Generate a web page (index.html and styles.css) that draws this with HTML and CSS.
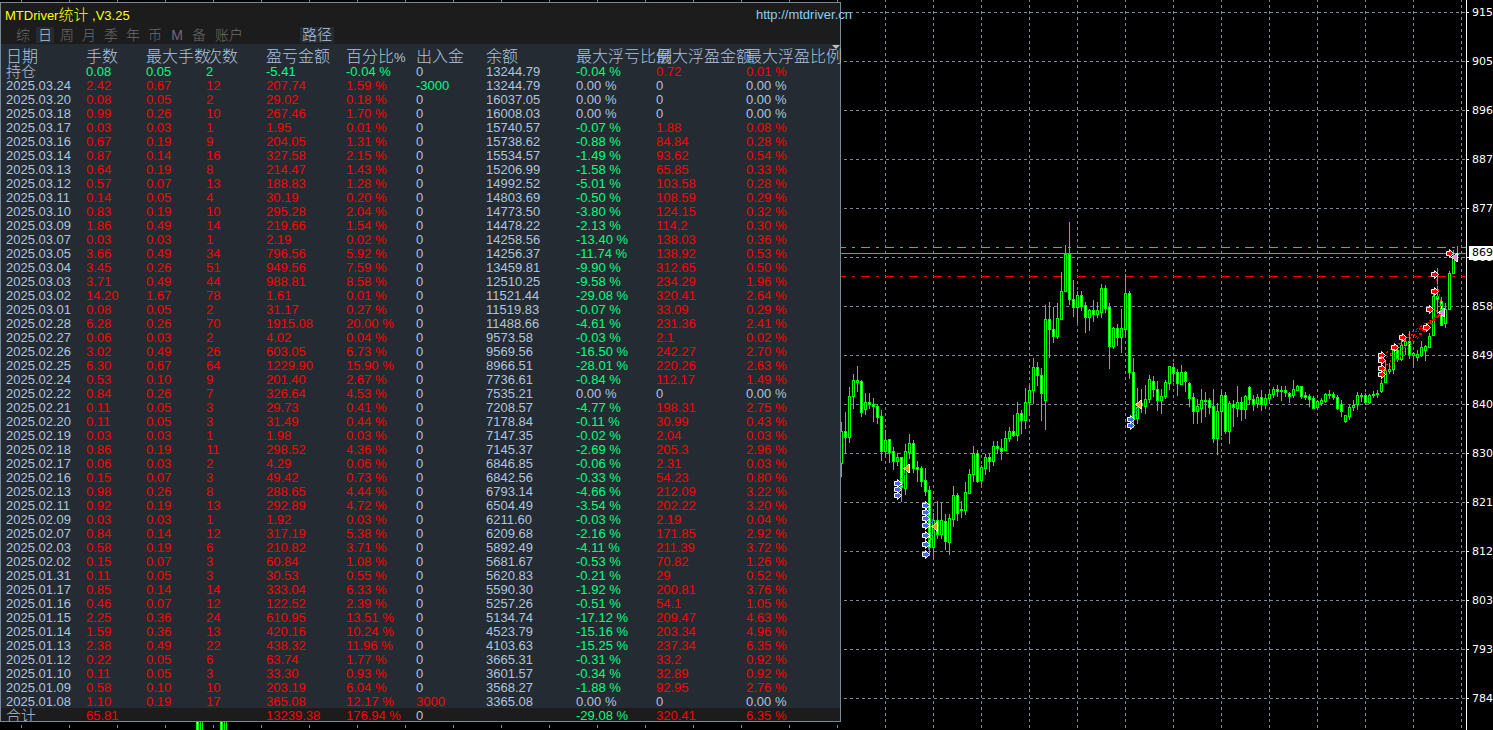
FILE: index.html
```html
<!DOCTYPE html>
<html lang="zh-CN">
<head>
<meta charset="utf-8">
<title>MTDriver统计</title>
<link rel="stylesheet" href="styles.css">
</head>
<body>
<main class="terminal">
  <svg class="chart" id="chart" viewBox="0 0 1466 730" preserveAspectRatio="xMinYMin slice" role="img" aria-label="K线图"></svg>

  <aside class="scale" aria-label="价格">
    <ol class="scale-list">
      <li>915</li><li>905</li><li>896</li><li>887</li><li>877</li><li>868</li><li>858</li><li>849</li>
      <li>840</li><li>830</li><li>821</li><li>812</li><li>803</li><li>793</li><li>784</li>
    </ol>
    <span class="scale-now">869</span>
  </aside>

  <section class="panel" aria-label="统计">
    <header class="panel-head">
      <div class="title-row">
        <h1 class="title">MTDriver<span class="title-cjk">统计</span> ,V3.25</h1>
        <a class="site" href="http://mtdriver.cn">http://mtdriver.cn</a>
      </div>
      <nav class="tabs" aria-label="周期">
        <button class="tab" type="button"><span>综</span></button>
        <button class="tab tab-on" type="button"><span>日</span></button>
        <button class="tab" type="button"><span>周</span></button>
        <button class="tab" type="button"><span>月</span></button>
        <button class="tab" type="button"><span>季</span></button>
        <button class="tab" type="button"><span>年</span></button>
        <button class="tab" type="button"><span>币</span></button>
        <button class="tab" type="button"><span>M</span></button>
        <button class="tab" type="button"><span>备</span></button>
        <button class="tab tab-wide" type="button"><span>账户</span></button>
        <button class="tab tab-path" type="button"><span>路径</span></button>
      </nav>
    </header>
    <svg class="shift-mark" width="8" height="4" viewBox="0 0 8 4" aria-hidden="true"><path d="M0 0h8L4 4z" fill="#c0c0c0"/></svg>
    <table class="stats">
      <colgroup>
        <col class="w80"><col class="w60"><col class="w60"><col class="w60"><col class="w80"><col class="w70">
        <col class="w70"><col class="w90"><col class="w80"><col class="w90"><col class="w94">
      </colgroup>
      <thead>
        <tr><th>日期</th><th>手数</th><th>最大手数</th><th>次数</th><th>盈亏金额</th><th>百分比<span class="unit">%</span></th><th>出入金</th><th>余额</th><th>最大浮亏比例</th><th>最大浮盈金额</th><th>最大浮盈比例</th></tr>
      </thead>
      <tbody id="rows"></tbody>
    </table>
    <div class="total-clip">
      <table class="stats total">
        <colgroup>
          <col class="w80"><col class="w60"><col class="w60"><col class="w60"><col class="w80"><col class="w70">
          <col class="w70"><col class="w90"><col class="w80"><col class="w90"><col class="w94">
        </colgroup>
        <tbody>
          <tr><td class="cjk">合计</td><td class="up">65.81</td><td></td><td></td><td class="up">13239.38</td><td class="up">176.94 %</td><td>0</td><td></td><td class="down">-29.08 %</td><td class="up">320.41</td><td class="up">6.35 %</td></tr>
        </tbody>
      </table>
    </div>
  </section>
</main>
<script src="app.js"></script>
</body>
</html>
```

FILE: styles.css
```css
* { box-sizing: border-box; }

body {
  margin: 0;
  background: #000;
  color: #b0c4de;
  font: 13px/14px "Liberation Sans", "Noto Sans CJK SC", sans-serif;
}

.terminal {
  position: relative;
  display: grid;
  grid-template-columns: 1fr 27px;
  height: 100vh;
  overflow: hidden;
}

.chart {
  display: block;
  width: 100%;
  height: 100%;
  min-height: 0;
  shape-rendering: crispEdges;
}

/* price scale */
.scale {
  position: relative;
  border-left: 1px solid #fff;
  color: #fff;
  font: 11px/49px "DejaVu Sans", sans-serif;
  overflow: hidden;
}
.scale-list {
  list-style: none;
  margin: -12px 0 0;
  padding: 0;
}
.scale-list li {
  display: flex;
  align-items: center;
  gap: 3px;
  height: 49px;
}
.scale-list li::before {
  content: "";
  width: 2px;
  height: 1px;
  background: #fff;
}
.scale-now {
  position: absolute;
  top: 246px;
  left: 2px;
  right: 0;
  padding-left: 3px;
  background: #fff;
  color: #000;
  line-height: 14px;
}

/* statistics window */
.panel {
  position: absolute;
  top: 2px;
  left: 0;
  border: 1px solid #778899;
  background: #252b33;
}
.panel-head {
  background: #1c1c1c;
  height: 41px;
}
.title-row {
  display: flex;
  height: 24px;
  padding-left: 4px;
  align-items: center;
}
.title {
  margin: 0;
  color: #ff0;
  font-size: 13px;
  font-weight: 400;
}
.title-cjk { font-size: 15px; font-weight: 300; }
.site {
  margin-left: auto;
  margin-right: -12px;
  color: #87cefa;
  text-decoration: none;
}
.tabs {
  display: flex;
  padding-left: 11px;
}
.tab {
  display: flex;
  justify-content: center;
  width: 22px;
  height: 16px;
  border: 0;
  padding: 0;
  background: none;
  color: #6c6c6c;
  font: 300 14px/16px "Liberation Sans", "Noto Sans CJK SC", sans-serif;
}
.tab span {
  display: block;
  height: 16px;
  text-align: center;
}
.tab-wide { width: 38px; }
.tab-on span,
.tab-path span {
  background: #252b33;
  color: #b0c4de;
}
.tab-on span { width: 18px; }
.tab-path {
  width: 34px;
  margin-left: 52px;
  font-size: 15px;
}
.tab-path span { width: 34px; }

.shift-mark {
  position: absolute;
  top: 42px;
  right: 0;
}

.stats {
  table-layout: fixed;
  width: 834px;
  margin-left: 5px;
  border-collapse: collapse;
}
.stats th,
.stats td {
  height: 14px;
  padding: 2px 0 0;
  line-height: 12px;
  text-align: left;
  white-space: nowrap;
}
.stats th {
  height: 20px;
  padding-top: 5px;
  font-size: 16px;
  font-weight: 300;
  line-height: 15px;
  vertical-align: top;
}
.stats .cjk {
  font-size: 15px;
  font-weight: 300;
}
.unit { font-size: 13px; line-height: 1px; }
.w60 { width: 60px; }
.w70 { width: 70px; }
.w80 { width: 80px; }
.w90 { width: 90px; }
.w94 { width: 94px; }
.up { color: #f00; }
.down { color: #00ff7f; }

.total-clip {
  height: 13px;
  background: #1c1c1c;
  overflow: hidden;
}

/* chart strokes */
.grid-h, .grid-v { stroke: #778899; stroke-dasharray: 3 3; }
.level { stroke-dasharray: 9 6 3 6; }
.level-green { stroke: #32cd32; }
.level-red { stroke: #f00; }
.bid { stroke: #778899; }
.wick { stroke: #0f0; }
.bull { fill: #000; stroke: #0f0; }
.bear { fill: #fff; stroke: #0f0; }
.link-sell { stroke: #f00; stroke-dasharray: 2 3; }
.link-buy { stroke: #4169e1; stroke-dasharray: 2 3; }
.mark { stroke: #fff; shape-rendering: geometricPrecision; }
.sell { fill: #f00; }
.buy { fill: #4169e1; }
.exit-buy { fill: #daa520; shape-rendering: geometricPrecision; }
.exit-sell { fill: #ee82ee; shape-rendering: geometricPrecision; }
```

FILE: app.js
```js
// date, lots, max lots, trades, profit, percent, deposit, balance, max loss %, max gain, max gain %
const stats = `持仓|0.08|0.05|2|-5.41|-0.04|0|13244.79|-0.04|0.72|0.01
2025.03.24|2.42|0.67|12|207.74|1.59|-3000|13244.79|0.00|0|0.00
2025.03.20|0.08|0.05|2|29.02|0.18|0|16037.05|0.00|0|0.00
2025.03.18|0.99|0.26|10|267.46|1.70|0|16008.03|0.00|0|0.00
2025.03.17|0.03|0.03|1|1.95|0.01|0|15740.57|-0.07|1.88|0.08
2025.03.16|0.67|0.19|9|204.05|1.31|0|15738.62|-0.88|84.84|0.28
2025.03.14|0.87|0.14|16|327.58|2.15|0|15534.57|-1.49|93.62|0.54
2025.03.13|0.64|0.19|8|214.47|1.43|0|15206.99|-1.58|65.85|0.33
2025.03.12|0.57|0.07|13|188.83|1.28|0|14992.52|-5.01|103.58|0.28
2025.03.11|0.14|0.05|4|30.19|0.20|0|14803.69|-0.50|108.59|0.29
2025.03.10|0.83|0.19|10|295.28|2.04|0|14773.50|-3.80|124.15|0.32
2025.03.09|1.86|0.49|14|219.66|1.54|0|14478.22|-2.13|114.2|0.30
2025.03.07|0.03|0.03|1|2.19|0.02|0|14258.56|-13.40|138.03|0.36
2025.03.05|3.66|0.49|34|796.56|5.92|0|14256.37|-11.74|138.92|0.53
2025.03.04|3.45|0.26|51|949.56|7.59|0|13459.81|-9.90|312.65|0.50
2025.03.03|3.71|0.49|44|988.81|8.58|0|12510.25|-9.58|234.29|1.96
2025.03.02|14.20|1.67|78|1.61|0.01|0|11521.44|-29.08|320.41|2.64
2025.03.01|0.08|0.05|2|31.17|0.27|0|11519.83|-0.07|33.09|0.29
2025.02.28|6.28|0.26|70|1915.08|20.00|0|11488.66|-4.61|231.36|2.41
2025.02.27|0.06|0.03|2|4.02|0.04|0|9573.58|-0.03|2.1|0.02
2025.02.26|3.02|0.49|26|603.05|6.73|0|9569.56|-16.50|242.27|2.70
2025.02.25|6.30|0.67|64|1229.90|15.90|0|8966.51|-28.01|220.26|2.63
2025.02.24|0.53|0.10|9|201.40|2.67|0|7736.61|-0.84|112.17|1.49
2025.02.22|0.84|0.26|7|326.64|4.53|0|7535.21|0.00|0|0.00
2025.02.21|0.11|0.05|3|29.73|0.41|0|7208.57|-4.77|198.31|2.75
2025.02.20|0.11|0.05|3|31.49|0.44|0|7178.84|-0.11|30.99|0.43
2025.02.19|0.03|0.03|1|1.98|0.03|0|7147.35|-0.02|2.04|0.03
2025.02.18|0.86|0.19|11|298.52|4.36|0|7145.37|-2.69|205.3|2.96
2025.02.17|0.06|0.03|2|4.29|0.06|0|6846.85|-0.06|2.31|0.03
2025.02.16|0.15|0.07|3|49.42|0.73|0|6842.56|-0.33|54.23|0.80
2025.02.13|0.98|0.26|8|288.65|4.44|0|6793.14|-4.66|212.09|3.22
2025.02.11|0.92|0.19|13|292.89|4.72|0|6504.49|-3.54|202.22|3.20
2025.02.09|0.03|0.03|1|1.92|0.03|0|6211.60|-0.03|2.19|0.04
2025.02.07|0.84|0.14|12|317.19|5.38|0|6209.68|-2.16|171.85|2.92
2025.02.03|0.58|0.19|6|210.82|3.71|0|5892.49|-4.11|211.39|3.72
2025.02.02|0.15|0.07|3|60.84|1.08|0|5681.67|-0.53|70.82|1.26
2025.01.31|0.11|0.05|3|30.53|0.55|0|5620.83|-0.21|29|0.52
2025.01.17|0.85|0.14|14|333.04|6.33|0|5590.30|-1.92|200.81|3.76
2025.01.16|0.46|0.07|12|122.52|2.39|0|5257.26|-0.51|54.1|1.05
2025.01.15|2.25|0.36|24|610.95|13.51|0|5134.74|-17.12|209.47|4.63
2025.01.14|1.59|0.36|13|420.16|10.24|0|4523.79|-15.16|203.34|4.96
2025.01.13|2.38|0.49|22|438.32|11.96|0|4103.63|-15.25|237.34|6.35
2025.01.12|0.22|0.05|6|63.74|1.77|0|3665.31|-0.31|33.2|0.92
2025.01.10|0.11|0.05|3|33.30|0.93|0|3601.57|-0.34|32.89|0.92
2025.01.09|0.58|0.10|10|203.19|6.04|0|3568.27|-1.88|92.95|2.76
2025.01.08|1.10|0.19|17|365.08|12.17|3000|3365.08|0.00|0|0.00`;

const tone = v => (v > 0 ? 'up' : v < 0 ? 'down' : '');

document.getElementById('rows').innerHTML = stats.split('\n').map(line => {
  const c = line.split('|');
  return '<tr>' + c.map((text, i) => {
    let cls = '';
    if (i === 0) cls = /\d/.test(text) ? '' : 'cjk';
    else if (i <= 5) cls = tone(+c[4]);
    else if (i !== 7) cls = tone(+text);
    const unit = i === 5 || i === 8 || i === 10 ? ' %' : '';
    return `<td class="${cls}">${text}${unit}</td>`;
  }).join('') + '</tr>';
}).join('');

// candles, 4px apart: high, body top, body bottom, low; u = rising, d = falling
const firstX = 841;
const candles = `422 431 463 476u,412 431 437 453d,387 396 437 442u,374 380 396 408u,366 380 382 391u,380 381 412 416d,
393 402 409 414u,393 402 404 408d,398 404 406 421d,404 406 417 423d,410 416 451 460d,430 440 451 456u,439 439 452 462d,
447 451 461 469d,453 457 461 465u,457 457 487 501d,444 451 488 494u,434 443 452 458u,440 443 468 472d,461 467 469 481d,
466 468 481 486d,468 480 491 495d,486 490 547 555d,513 520 547 559u,501 520 534 538d,503 520 534 538u,514 521 541 549d,
514 518 542 554u,486 495 519 526u,493 495 513 520d,501 509 510 517u,482 492 510 514u,469 474 493 493u,446 453 474 481u,
450 453 481 482d,465 467 480 484u,454 457 468 474u,453 457 461 471d,441 446 461 465u,441 446 448 453d,439 448 451 459d,
431 438 450 450u,427 431 438 441u,415 431 435 436d,402 413 435 440u,410 413 420 433d,388 402 420 428u,385 390 402 414u,
358 367 390 403u,362 367 375 385d,368 375 393 420d,305 319 400 429u,302 319 329 357d,307 329 336 342d,303 318 336 338u,
272 291 319 319u,245 254 291 291u,222 254 299 304d,280 299 307 316d,291 295 307 322u,291 295 306 310d,302 305 317 332d,
309 310 317 330u,300 310 314 321d,302 310 314 317u,284 288 312 317u,285 288 308 312d,303 307 346 368d,327 328 346 348u,
324 328 337 345d,309 328 337 352u,274 293 329 335u,291 293 372 378d,358 372 418 427d,388 407 418 423u,389 403 405 412u,
385 399 406 413u,375 379 399 402u,376 381 389 396d,381 389 400 410d,389 396 400 413u,380 382 396 398u,366 366 383 389u,
363 367 373 381d,369 372 383 395d,365 372 384 384u,371 372 381 391d,382 383 398 406d,393 397 411 423d,399 406 411 423u,
389 400 408 422u,392 400 401 416u,398 400 407 413d,389 406 438 442d,403 411 438 454u,391 395 411 435u,392 395 431 433d,
401 403 431 443u,400 404 407 426d,386 402 408 416u,397 402 409 420d,395 396 409 418u,386 387 399 404d,395 399 404 410d,
394 397 403 407u,390 397 404 410d,394 398 404 408u,390 394 398 403u,387 389 394 397u,385 389 391 396d,386 390 391 400u,
386 390 392 396d,392 393 396 402d,380 389 395 397u,385 386 390 390u,386 386 396 398d,392 395 397 399d,394 396 399 406d,
396 398 408 408d,400 401 407 409u,398 400 403 405u,393 394 401 402u,390 394 395 398d,392 394 397 399d,395 397 408 409d,
400 404 411 416d,415 415 421 422u,405 407 416 419u,400 405 407 410u,392 395 404 409u,393 395 396 401u,393 395 402 404d,
394 395 402 403u,391 394 395 397u,390 393 394 397u,380 383 391 392u,360 370 382 382u,363 369 371 373u,345 350 369 373u,
345 350 359 361d,340 345 359 360u,337 341 345 354u,331 341 354 358d,352 353 355 365u,350 354 357 360u,341 347 355 356u,
345 346 350 360u,333 336 347 347u,293 296 335 335u,268 296 299 313d,297 301 325 325d,303 309 323 327u,271 273 309 309u,
250 256 273 273u,246 253 254 260u`;

const out = [];
const line = (cls, x1, y1, x2, y2) =>
  out.push(`<line class="${cls}" x1="${x1 + .5}" y1="${y1 + .5}" x2="${x2 + .5}" y2="${y2 + .5}"/>`);
const vline = (cls, x, y1, y2) => out.push(`<path class="${cls}" d="M${x + .5} ${y1}V${y2}"/>`);
const hline = (cls, y, x1, x2) => out.push(`<path class="${cls}" d="M${x1} ${y + .5}H${x2}"/>`);

for (let y = 12; y < 730; y += 49) hline('grid-h', y, -2, 1466);
for (let x = 21; x < 1466; x += 48) vline('grid-v', x, -1, 730);

hline('level level-green', 247, -3, 1466);
hline('level level-red', 276, -3, 1466);

candles.split(',').forEach((item, i) => {
  const x = firstX + 4 * i;
  const [high, top, bottom, low] = item.trim().slice(0, -1).split(' ').map(Number);
  vline('wick', x, high, low + 1);
  out.push(`<rect class="${item.endsWith('u') ? 'bull' : 'bear'}" x="${x - .5}" y="${top + .5}" width="2" height="${Math.max(bottom - top, 1)}"/>`);
});

// candle feet showing under the window
[196, 220].forEach(x => {
  out.push(`<rect x="${x}" y="722" width="3" height="8" fill="#0f0"/><rect x="${x + 1}" y="722" width="1" height="8" fill="#fff"/>`);
  vline('wick', x + 4, 722, 730);
  vline('wick', x + 6, 722, 730);
});

hline('bid', 253, 0, 1466);
hline('level level-green', 253, -3, 1466);

const sells = [[1382,355],[1382,360],[1382,368],[1382,374],[1395,347],[1403,337],[1427,327],[1430,309],[1435,291],[1435,274]];
sells.forEach(([x, y]) => line('link-sell', x, y, 1442, 312));
line('link-sell', 1450, 253, 1455, 257);

const buys = [
  [907, 468, [[898,483],[898,489],[898,495]]],
  [935, 526, [[926,505],[926,512],[926,518],[926,525],[926,535],[926,544],[926,554]]],
  [1139, 404, [[1131,419],[1131,425]]]
];
const arrow = (cls, x, y) =>
  out.push(`<path class="mark ${cls}" d="M${x - 3.5} ${y - 1.5}h3v-2l4 4l-4 4v-2h-3z"/>`);
const exit = (cls, x, y) =>
  out.push(`<path d="M${x - 4} ${y + .5}L${x + 2} ${y - 4}h1v9h-1z" fill="#fff"/><path class="${cls}" d="M${x - 3} ${y + .5}l5-4v8z"/>`);

buys.forEach(([tx, ty, from]) => {
  from.forEach(([x, y]) => line('link-buy', x, y, tx, ty));
  from.forEach(([x, y]) => arrow('buy', x, y));
  exit('exit-buy', tx, ty);
});
sells.concat([[1450, 253]]).forEach(([x, y]) => arrow('sell', x, y));
exit('exit-sell', 1442, 312);
exit('exit-sell', 1455, 257);

document.getElementById('chart').innerHTML = out.join('');
```
